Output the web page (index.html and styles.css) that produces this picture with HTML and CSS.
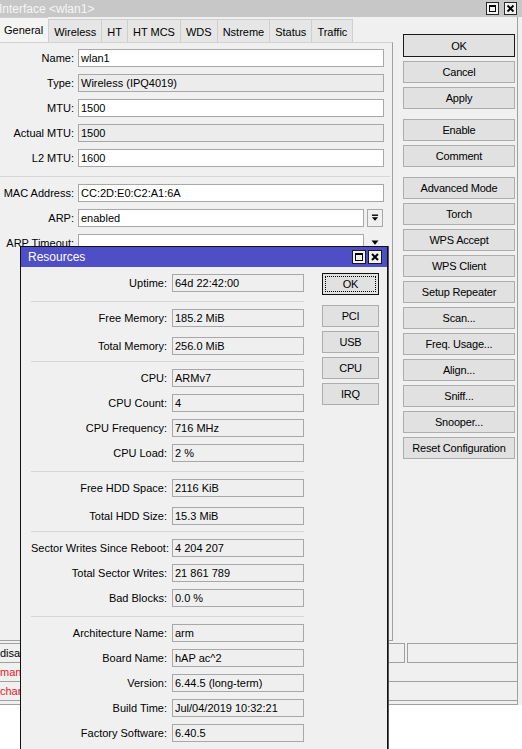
FILE: index.html
```html
<!DOCTYPE html>
<html>
<head>
<meta charset="utf-8">
<title>Interface wlan1</title>
<link rel="stylesheet" href="styles.css">
</head>
<body>
<div class="main">
  <div class="titlebar">
    <span class="title">Interface &lt;wlan1&gt;</span>
    <span class="wbtns">
      <span class="wbtn"><svg viewBox="0 0 11 11"><rect x="2.5" y="2.5" width="6" height="6" fill="none" stroke="#000" stroke-width="1"/><rect x="2" y="2" width="7" height="2" fill="#000"/></svg></span>
      <span class="wbtn"><svg viewBox="0 0 11 11"><path d="M2.5 2.5 L8.5 8.5 M8.5 2.5 L2.5 8.5" stroke="#000" stroke-width="1.8"/></svg></span>
    </span>
  </div>
  <div class="frame">
    <div class="mainbody">
      <div class="tabctl">
        <div class="tabs">
          <span class="tab sel">General</span>
          <span class="tab">Wireless</span>
          <span class="tab">HT</span>
          <span class="tab">HT MCS</span>
          <span class="tab">WDS</span>
          <span class="tab">Nstreme</span>
          <span class="tab">Status</span>
          <span class="tab last">Traffic</span>
        </div>
        <div class="panel">
          <div class="frow"><span class="lbl">Name:</span><span class="fld">wlan1</span></div>
          <div class="frow"><span class="lbl">Type:</span><span class="fld ro">Wireless (IPQ4019)</span></div>
          <div class="frow"><span class="lbl">MTU:</span><span class="fld">1500</span></div>
          <div class="frow"><span class="lbl">Actual MTU:</span><span class="fld ro">1500</span></div>
          <div class="frow"><span class="lbl">L2 MTU:</span><span class="fld">1600</span></div>
          <div class="hsep"></div>
          <div class="frow"><span class="lbl">MAC Address:</span><span class="fld">CC:2D:E0:C2:A1:6A</span></div>
          <div class="frow"><span class="lbl">ARP:</span><span class="fld short">enabled</span>
            <span class="ddbtn"><svg viewBox="0 0 16 18"><rect x="4.5" y="5" width="7" height="1.6" fill="#000"/><path d="M4.5 8 L11.5 8 L8 12 Z" fill="#000"/></svg></span></div>
          <div class="frow"><span class="lbl">ARP Timeout:</span><span class="fld short"></span>
            <span class="ddbtn plain"><svg viewBox="0 0 16 18"><path d="M4 6 L12 6 L8 11 Z" fill="#000"/></svg></span></div>
        </div>
      </div>
      <div class="btncol">
        <span class="btn default">OK</span>
        <span class="btn">Cancel</span>
        <span class="btn">Apply</span>
        <span class="btn grp">Enable</span>
        <span class="btn">Comment</span>
        <span class="btn grp">Advanced Mode</span>
        <span class="btn">Torch</span>
        <span class="btn">WPS Accept</span>
        <span class="btn">WPS Client</span>
        <span class="btn">Setup Repeater</span>
        <span class="btn">Scan...</span>
        <span class="btn">Freq. Usage...</span>
        <span class="btn">Align...</span>
        <span class="btn">Sniff...</span>
        <span class="btn">Snooper...</span>
        <span class="btn">Reset Configuration</span>
      </div>
    </div>
    <div class="status">
      <div class="srow1">
        <span class="scell wide">disabled</span>
        <span class="scell rest"></span>
      </div>
      <div class="srow red">managed by CAPsMAN</div>
      <div class="srow red">channel: 2412/20/gn</div>
    </div>
  </div>
</div>

<div class="res">
  <div class="res-title">
    <span>Resources</span>
    <span class="rbtns">
      <span class="rbtn"><svg viewBox="0 0 12 12"><rect x="2.5" y="2.5" width="7" height="7" fill="none" stroke="#000" stroke-width="1"/><rect x="2" y="2" width="8" height="2" fill="#000"/></svg></span>
      <span class="rbtn"><svg viewBox="0 0 12 12"><path d="M3 3 L9 9 M9 3 L3 9" stroke="#000" stroke-width="2"/></svg></span>
    </span>
  </div>
  <div class="res-body">
    <div class="res-rows">
      <div class="rrow"><span class="rlbl">Uptime:</span><span class="rfld">64d 22:42:00</span></div>
      <div class="rsep"></div>
      <div class="rrow"><span class="rlbl">Free Memory:</span><span class="rfld">185.2 MiB</span></div>
      <div class="rrow tall"><span class="rlbl">Total Memory:</span><span class="rfld">256.0 MiB</span></div>
      <div class="rsep s2"></div>
      <div class="rrow"><span class="rlbl">CPU:</span><span class="rfld">ARMv7</span></div>
      <div class="rrow"><span class="rlbl">CPU Count:</span><span class="rfld">4</span></div>
      <div class="rrow"><span class="rlbl">CPU Frequency:</span><span class="rfld">716 MHz</span></div>
      <div class="rrow"><span class="rlbl">CPU Load:</span><span class="rfld">2 %</span></div>
      <div class="rsep"></div>
      <div class="rrow"><span class="rlbl">Free HDD Space:</span><span class="rfld">2116 KiB</span></div>
      <div class="rrow tall"><span class="rlbl">Total HDD Size:</span><span class="rfld">15.3 MiB</span></div>
      <div class="rsep s2"></div>
      <div class="rrow"><span class="rlbl">Sector Writes Since Reboot:</span><span class="rfld">4 204 207</span></div>
      <div class="rrow"><span class="rlbl">Total Sector Writes:</span><span class="rfld">21 861 789</span></div>
      <div class="rrow"><span class="rlbl">Bad Blocks:</span><span class="rfld">0.0 %</span></div>
      <div class="rsep"></div>
      <div class="rrow"><span class="rlbl">Architecture Name:</span><span class="rfld">arm</span></div>
      <div class="rrow"><span class="rlbl">Board Name:</span><span class="rfld">hAP ac^2</span></div>
      <div class="rrow"><span class="rlbl">Version:</span><span class="rfld">6.44.5 (long-term)</span></div>
      <div class="rrow"><span class="rlbl">Build Time:</span><span class="rfld">Jul/04/2019 10:32:21</span></div>
      <div class="rrow"><span class="rlbl">Factory Software:</span><span class="rfld">6.40.5</span></div>
    </div>
    <div class="res-btns">
      <span class="btn focus">OK</span>
      <span class="btn grp2">PCI</span>
      <span class="btn">USB</span>
      <span class="btn">CPU</span>
      <span class="btn">IRQ</span>
    </div>
  </div>
</div>
</body>
</html>
```

FILE: styles.css
```css
* { box-sizing: border-box; }
html, body { margin: 0; padding: 0; }
body {
  width: 522px;
  height: 749px;
  overflow: hidden;
  position: relative;
  background: #ffffff;
  font-family: "Liberation Sans", Arial, sans-serif;
  font-size: 11px;
  color: #000;
}

/* main window */
.main {
  width: 522px;
  height: 705px;
  background: #f0f0f0;
  display: flex;
  flex-direction: column;
}
.titlebar {
  height: 17px;
  background: #c7c7c7;
  color: #f6f6f6;
  font-size: 12px;
  display: flex;
  align-items: center;
  justify-content: space-between;
}
.title { margin-left: -1px; }
.wbtns { display: flex; gap: 5px; margin-right: 5px; }
.wbtn {
  width: 13px;
  height: 13px;
  border: 1px solid #2a2a2a;
  background: #f2f2f2;
  display: flex;
}
.wbtn svg { width: 11px; height: 11px; }

.frame {
  flex: 1;
  width: 518px;
  border-right: 1px solid #a0a0a0;
  border-bottom: 1px solid #a0a0a0;
  display: flex;
  flex-direction: column;
}
.mainbody { display: flex; flex: 1; }
.tabctl { width: 393px; display: flex; flex-direction: column; }
.tabs {
  height: 25px;
  display: flex;
  align-items: flex-end;
}
.tab {
  height: 23px;
  padding: 0 5px;
  border-left: 1px solid #cfcfcf;
  border-top: 1px solid #cfcfcf;
  background: #e6e6e6;
  display: flex;
  align-items: center;
  padding-top: 1px;
}
.tab.last { border-right: 1px solid #cfcfcf; }
.tab.sel {
  height: 25px;
  background: #f4f4f4;
  border-left: none;
  padding-left: 4px;
  padding-bottom: 2px;
}
.panel {
  flex: 1;
  border-top: 1px solid #d2d2d2;
  border-right: 1px solid #a0a0a0;
  border-bottom: 1px solid #a0a0a0;
  padding-top: 6px;
  display: flex;
  flex-direction: column;
}
.frow {
  display: flex;
  align-items: center;
  height: 18px;
  margin-bottom: 7px;
}
.lbl {
  width: 74px;
  text-align: right;
  margin-right: 4px;
  white-space: nowrap;
}
.fld {
  width: 306px;
  height: 18px;
  border: 1px solid #a8a8a8;
  background: #ffffff;
  padding-left: 2px;
  line-height: 16px;
}
.fld.ro { background: #ececec; }
.fld.short { width: 286px; }
.ddbtn {
  width: 16px;
  height: 18px;
  margin-left: 3px;
  border: 1px solid #a8a8a8;
  background: #f0f0f0;
  display: flex;
}
.ddbtn.plain { border-color: transparent; background: transparent; }
.ddbtn svg { width: 14px; height: 16px; }
.hsep {
  height: 1px;
  background: #d6d6d6;
  margin: 2px 2px 7px 0;
}

/* buttons */
.btncol {
  margin-left: 10px;
  width: 112px;
  padding-top: 17px;
  display: flex;
  flex-direction: column;
  gap: 4px;
}
.btn {
  height: 22px;
  background: #e1e1e1;
  border: 1px solid #adadad;
  display: flex;
  align-items: center;
  justify-content: center;
  white-space: nowrap;
  letter-spacing: -0.2px;
}
.btn.default { height: 23px; border-color: #1a1a1a; }
.btn.grp { margin-top: 6px; }

/* status area */
.status { height: 63px; display: flex; flex-direction: column; }
.srow1 {
  margin-top: 2px;
  height: 20px;
  display: flex;
  gap: 2px;
}
.scell {
  border: 1px solid #a0a0a0;
  height: 20px;
  line-height: 18px;
}
.scell.wide { width: 405px; border-left: none; padding-left: 0; }
.scell.rest { flex: 1; border-right: none; }
.srow {
  height: 19px;
  border-bottom: 1px solid #a0a0a0;
  line-height: 18px;
  padding-left: 0;
}
.red { color: #e0202e; }

/* resources window */
.res {
  position: absolute;
  left: 20px;
  top: 246px;
  width: 368px;
  height: 530px;
  background: #f0f0f0;
  border: 1px solid #111;
  box-shadow: 1px 0 0 #555;
}
.res-title {
  height: 20px;
  background: #4e4ec6;
  color: #ffffff;
  font-size: 12px;
  display: flex;
  align-items: center;
  justify-content: space-between;
  padding-left: 7px;
  padding-right: 5px;
}
.rbtns { display: flex; gap: 2px; }
.rbtn {
  width: 14px;
  height: 14px;
  border: 1px solid #1a1a1a;
  background: #f0f0f0;
  display: flex;
}
.rbtn svg { width: 12px; height: 12px; }
.res-body {
  display: flex;
  padding-top: 6px;
}
.res-rows {
  margin-left: 10px;
  width: 273px;
  padding-top: 1px;
  display: flex;
  flex-direction: column;
}
.rrow {
  display: flex;
  align-items: center;
  height: 18px;
  margin-top: 7px;
}
.rrow:first-child { margin-top: 0; }
.rrow.tall { margin-top: 10px; }
.rlbl {
  width: 136px;
  text-align: right;
  margin-right: 5px;
  white-space: nowrap;
}
.rfld {
  width: 132px;
  height: 18px;
  border: 1px solid #a8a8a8;
  background: #efefef;
  padding-left: 2px;
  line-height: 16px;
  white-space: nowrap;
}
.rsep {
  height: 1px;
  background: #d6d6d6;
  margin-top: 9px;
  margin-bottom: 0;
}
.rsep.s2 { margin-top: 6px; }
.res-btns {
  margin-left: 18px;
  width: 57px;
  display: flex;
  flex-direction: column;
  gap: 4px;
}
.btn.focus {
  border-color: #111;
  outline: 1px dotted #000;
  outline-offset: -4px;
}
.btn.grp2 { margin-top: 6px; }
```
